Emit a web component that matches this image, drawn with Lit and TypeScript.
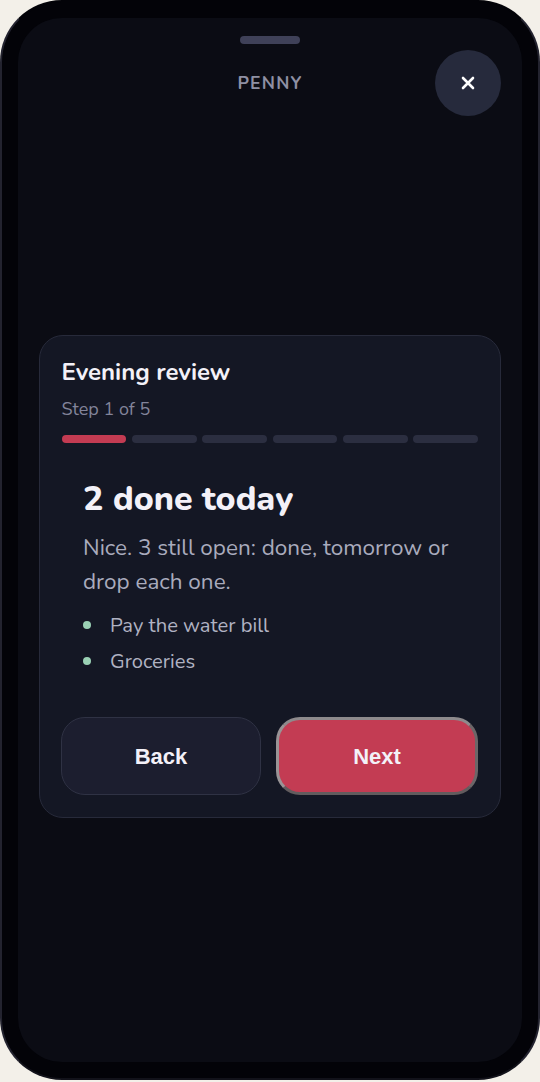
import { LitElement, html, css } from "lit";
import { customElement } from "lit/decorators.js";

@customElement("app-root")
export class AppRoot extends LitElement {
  static styles = css`
    :host { display: block; width: 540px; height: 1082px; background: #f3f0e9; font-family: "Nunito", "Lato", "Noto Sans", sans-serif; overflow: hidden; }
    .frame { box-sizing: border-box; width: 540px; height: 1080px; background: #030308; border: 2px solid #23232f; border-top-color: #030308; border-bottom-color: #12121a; border-radius: 62px; padding: 16px; }
    .screen { box-sizing: border-box; height: 100%; background: #0b0c14; border-radius: 44px; position: relative; display: flex; flex-direction: column; }
    .handle { position: absolute; left: 222px; top: 18px; width: 60px; height: 8px; border-radius: 4px; background: #3f4158; }
    .header { height: 66px; margin-top: 32px; display: flex; align-items: center; justify-content: center; }
    .brand { font-size: 17.6px; font-weight: 700; letter-spacing: 1.2px; color: #8f90a3; }
    .close { position: absolute; left: 417px; top: 32px; width: 66px; height: 66px; border-radius: 50%; border: 0; padding: 0; background: #262a3c; display: flex; align-items: center; justify-content: center; }
    .card { box-sizing: border-box; width: 462px; height: 483px; margin: 219px 0 0 21px; background: #141724; border: 1px solid #272a3a; border-radius: 24px; padding: 21px 22px 21px 21.5px; display: flex; flex-direction: column; }
    .title { font-size: 24px; line-height: 30px; font-weight: 700; color: #f3f1f8; }
    .step { font-size: 18px; line-height: 24px; color: #82849a; margin-top: 10px; }
    .bars { display: grid; grid-template-columns: repeat(6, 1fr); gap: 5.6px; margin: 14px 0 0 0; }
    .bar { height: 8px; border-radius: 4px; background: #2b2e40; }
    .bar.on { background: #c33b52; }
    .body { flex: 1; padding: 35px 21px 0 21.5px; }
    h2 { margin: 0; font-size: 34px; line-height: 42px; font-weight: 800; color: #f3f1f8; }
    p { margin: 11px 0 0; font-size: 22.5px; line-height: 34px; color: #a9abbd; }
    ul { list-style: none; margin: 8px 0 0; padding: 0; }
    li { height: 36px; display: flex; align-items: center; gap: 19px; font-size: 20.2px; color: #b0b2c2; }
    li::before { content: ""; width: 8px; height: 8px; border-radius: 50%; background: #9ad0b4; }
    .actions { display: grid; grid-template-columns: 200px 202px; gap: 15px; margin: 2px 0 1px -0.5px; }
    button.b { box-sizing: border-box; height: 78px; border-radius: 24px; padding: 2px 0 0; font: 700 22px "Liberation Sans", Arial, sans-serif; color: #f3f1f8; }
    .back { background: #1c1e2f; border: 1px solid #2f3244; }
    .next { background: #c33c53; border: 3px solid; border-color: #8e8a8c #6c6668 #625c5e #999496; color: #fff; }
  `;

  render() {
    return html`
      <div class="frame">
        <div class="screen">
          <div class="handle"></div>
          <div class="header"><span class="brand">PENNY</span></div>
          <button class="close" aria-label="Close">
            <svg width="14" height="14" viewBox="0 0 14 14"><path d="M2 2 L12 12 M12 2 L2 12" stroke="#fff" stroke-width="2.6" stroke-linecap="round"/></svg>
          </button>
          <section class="card">
            <div class="title">Evening review</div>
            <div class="step">Step 1 of 5</div>
            <div class="bars">
              <div class="bar on"></div><div class="bar"></div><div class="bar"></div>
              <div class="bar"></div><div class="bar"></div><div class="bar"></div>
            </div>
            <div class="body">
              <h2>2 done today</h2>
              <p>Nice. 3 still open: done, tomorrow or drop each one.</p>
              <ul><li>Pay the water bill</li><li>Groceries</li></ul>
            </div>
            <div class="actions">
              <button class="b back">Back</button>
              <button class="b next">Next</button>
            </div>
          </section>
        </div>
      </div>
    `;
  }
}
